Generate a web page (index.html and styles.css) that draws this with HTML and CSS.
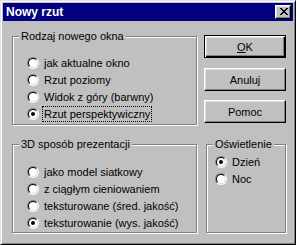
FILE: index.html
```html
<!DOCTYPE html>
<html>
<head>
<meta charset="utf-8">
<link rel="stylesheet" href="styles.css">
</head>
<body>
<div class="window">
  <div class="titlebar">
    <span class="title">Nowy rzut</span>
    <span class="close"><svg width="8" height="7" viewBox="0 0 8 7"><path d="M0 0h2v1h1v1h2V1h1V0h2v1H7v1H6v1H5v1h1v1h1v1h1v1H6V6H5V5H3v1H2v1H0V6h1V5h1V4h1V3H2V2H1V1H0z" fill="#000"/></svg></span>
  </div>
  <div class="body">
    <div class="leftcol">
      <div class="group g1">
        <span class="legend">Rodzaj nowego okna</span>
        <div class="opt"><span class="radio"><span class="in"></span></span><span class="lbl">jak aktualne okno</span></div>
        <div class="opt"><span class="radio"><span class="in"></span></span><span class="lbl">Rzut poziomy</span></div>
        <div class="opt"><span class="radio"><span class="in"></span></span><span class="lbl">Widok z góry (barwny)</span></div>
        <div class="opt"><span class="radio"><span class="in"><span class="dot"></span></span></span><span class="lbl focus">Rzut perspektywiczny</span></div>
      </div>
      <div class="group g2">
        <span class="legend">3D sposób prezentacji</span>
        <div class="opt"><span class="radio"><span class="in"></span></span><span class="lbl">jako model siatkowy</span></div>
        <div class="opt"><span class="radio"><span class="in"></span></span><span class="lbl">z ciągłym cieniowaniem</span></div>
        <div class="opt"><span class="radio"><span class="in"></span></span><span class="lbl">teksturowane (śred. jakość)</span></div>
        <div class="opt"><span class="radio"><span class="in"><span class="dot"></span></span></span><span class="lbl">teksturowanie (wys. jakość)</span></div>
      </div>
    </div>
    <div class="rightcol">
      <div class="btn default"><span class="face"><u>O</u>K</span></div>
      <div class="btn b2"><span class="face">Anuluj</span></div>
      <div class="btn b3"><span class="face">Pomoc</span></div>
      <div class="group g3">
        <span class="legend">Oświetlenie</span>
        <div class="opt"><span class="radio"><span class="in"><span class="dot"></span></span></span><span class="lbl">Dzień</span></div>
        <div class="opt"><span class="radio"><span class="in"></span></span><span class="lbl">Noc</span></div>
      </div>
    </div>
  </div>
</div>
</body>
</html>
```
FILE: styles.css
```css
html, body {
  margin: 0;
  padding: 0;
  background: #c0c0c0;
}
.window {
  width: 296px;
  height: 245px;
  box-sizing: border-box;
  border: 1px solid;
  border-color: #dfdfdf #000 #000 #dfdfdf;
  box-shadow: inset 1px 1px 0 #fff, inset -1px -1px 0 #808080;
  padding: 2px;
  background: #c0c0c0;
  display: flex;
  flex-direction: column;
  font: 11px "Liberation Sans", Arial, sans-serif;
  color: #000;
}
.titlebar {
  height: 18px;
  background: #000080;
  display: flex;
  align-items: center;
  justify-content: space-between;
  padding: 0 2px 0 3px;
}
.title {
  color: #fff;
  font-weight: bold;
  font-size: 12px;
}
.close {
  width: 16px;
  height: 14px;
  box-sizing: border-box;
  background: #c0c0c0;
  border: 1px solid;
  border-color: #fff #000 #000 #fff;
  box-shadow: inset -1px -1px 0 #808080, inset 1px 1px 0 #dfdfdf;
  display: flex;
  align-items: center;
  justify-content: center;
  padding-bottom: 1px;
  padding-left: 1px;
}
.close svg { display: block; }
.body {
  display: flex;
  padding-left: 9px;
}
.leftcol {
  width: 185px;
  display: flex;
  flex-direction: column;
}
.group {
  position: relative;
  box-sizing: border-box;
  border: 1px solid #808080;
  box-shadow: 1px 1px 0 #fff, inset 1px 1px 0 #fff;
  display: flex;
  flex-direction: column;
}
.legend {
  position: absolute;
  top: -8px;
  left: 6px;
  padding: 0 2px 0 2px;
  background: #c0c0c0;
  line-height: 14px;
}
.g1 {
  margin-top: 15px;
  height: 89px;
  padding: 17px 0 0 14px;
}
.g2 {
  margin-top: 19px;
  height: 89px;
  padding: 18px 0 0 14px;
}
.opt {
  height: 17px;
  display: flex;
  align-items: center;
}
.radio {
  width: 12px;
  height: 12px;
  box-sizing: border-box;
  border-radius: 50%;
  border: 1px solid;
  border-color: #808080 #fff #fff #808080;
  transform: rotate(0deg);
  display: flex;
  flex: none;
}
.radio .in {
  flex: 1;
  border-radius: 50%;
  border: 1px solid;
  border-color: #000 #dfdfdf #dfdfdf #000;
  background: #fff;
  display: flex;
  align-items: center;
  justify-content: center;
}
.dot {
  width: 4px;
  height: 4px;
  border-radius: 50%;
  background: #000;
}
.lbl {
  margin-left: 4px;
  padding: 0 1px;
  line-height: 14px;
}
.focus {
  outline: 1px dotted #000;
  outline-offset: 0;
}
.rightcol {
  margin-left: 7px;
  width: 82px;
  display: flex;
  flex-direction: column;
}
.btn {
  width: 82px;
  height: 23px;
  box-sizing: border-box;
  border: 1px solid;
  border-color: #fff #000 #000 #fff;
  box-shadow: inset -1px -1px 0 #808080, inset 1px 1px 0 #dfdfdf;
  display: flex;
  align-items: center;
  justify-content: center;
}
.btn .face {
  line-height: 14px;
}
.btn.default {
  margin-top: 14px;
  border: 1px solid #000;
  box-shadow: inset 1px 1px 0 #fff, inset -1px -1px 0 #000, inset -2px -2px 0 #808080, inset 2px 2px 0 #dfdfdf;
}
.b2 { margin-top: 10px; }
.b3 { margin-top: 9px; }
.g3 {
  margin-top: 21px;
  margin-left: 2px;
  width: 80px;
  height: 89px;
  padding: 8px 0 0 8px;
}
```
